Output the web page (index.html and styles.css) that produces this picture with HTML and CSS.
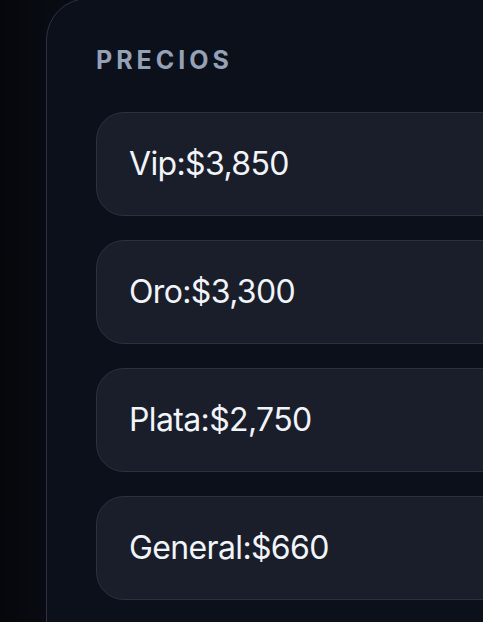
FILE: index.html
```html
<!DOCTYPE html>
<html lang="es">
<head>
    <meta charset="utf-8">
    <title>Precios</title>
    <link rel="stylesheet" href="styles.css">
</head>
<body>
<div class="page">
    <section class="panel">
        <h2 class="panel-title">PRECIOS</h2>
        <ul class="price-list">
            <li class="price-item">Vip:$3,850</li>
            <li class="price-item">Oro:$3,300</li>
            <li class="price-item">Plata:$2,750</li>
            <li class="price-item">General:$660</li>
        </ul>
    </section>
</div>
</body>
</html>
```

FILE: styles.css
```css
*{margin:0;padding:0;box-sizing:border-box;}
html,body{height:100%;}
body{background:linear-gradient(90deg,#05070b 0%,#080b12 10%,#0a0d16 100%);overflow:hidden;font-family:Inter,"Liberation Sans",sans-serif;}
.page{padding-left:46px;}
.panel{width:640px;height:700px;margin-top:-2px;background:#0b101b;border:1px solid #2d323e;border-radius:42px 0 0 0;padding:49px 0 0 49px;}
.panel-title{font-size:25px;line-height:24px;font-weight:700;letter-spacing:0.16em;color:#95a1b7;margin-bottom:40px;}
.price-list{list-style:none;display:flex;flex-direction:column;gap:24px;}
.price-item{height:104px;display:flex;align-items:center;padding:0 32px;background:#1a1e2a;border:1px solid #2c313d;border-radius:28px;color:#f1f4f8;font-size:32px;line-height:1;font-weight:400;letter-spacing:-0.02em;}
```
